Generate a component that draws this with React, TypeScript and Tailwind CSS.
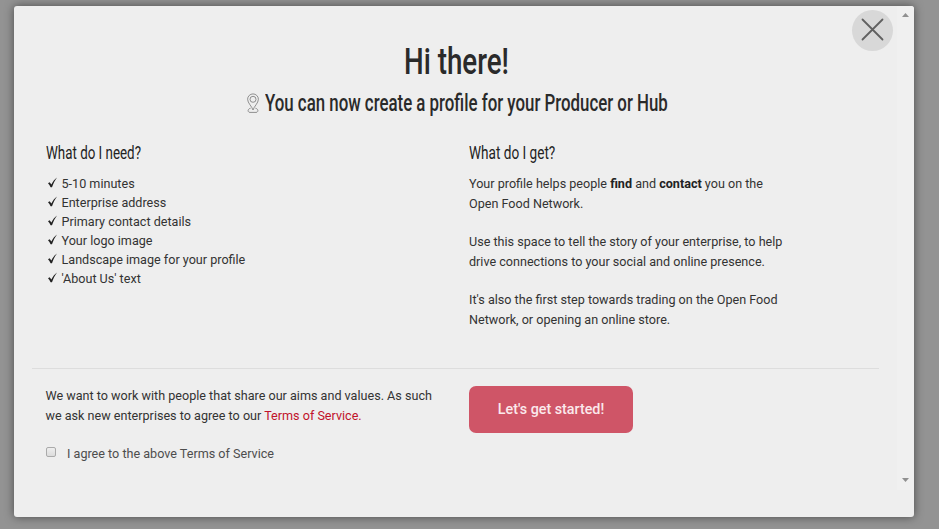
import React from 'react';

const needs = [
  '5-10 minutes',
  'Enterprise address',
  'Primary contact details',
  'Your logo image',
  'Landscape image for your profile',
  "'About Us' text",
];

function Tick() {
  return (
    <svg className="mr-[4px] mb-[2px] ml-[2px] h-[11px] w-[10px] shrink-0" viewBox="0 0 10 11">
      <path d="M0 6.2 L1.6 5.2 L3.4 7.4 C4.8 4.6 6.6 2 9 0.4 C7 3.2 5.2 6.6 4 10.2 L2.6 10.2 C1.9 8.6 1 7.3 0 6.2Z" fill="#222" />
    </svg>
  );
}

function MapPin() {
  return (
    <svg className="mb-[2px] h-[21px] w-[12px]" viewBox="0 0 12 21" fill="none" stroke="#777" strokeWidth="0.8">
      <path d="M6 17 C5 13.5 0.6 10 0.6 6.3 A5.4 5.4 0 0 1 11.4 6.3 C11.4 10 7 13.5 6 17Z" />
      <circle cx="6" cy="6.3" r="3" />
      <path d="M3.6 15.2 C0.4 15.8 0.4 19.4 3 19.4 H9 C11.6 19.4 11.6 15.8 8.4 15.2" />
    </svg>
  );
}

export default function App() {
  return (
    <div className="h-[529px] w-[939px] overflow-hidden bg-[#939393] pt-[6px] pl-[14px] font-[Roboto,sans-serif] text-[12.6px] leading-[20px] text-[#333]">
      <div className="relative h-[511px] w-[900px] rounded-[3px] bg-[#eeeeee] pt-[36px] shadow-[0_0_10px_rgba(0,0,0,0.5)]">
        <h1 className="ml-[389.5px] h-[40px] w-[160px] origin-left scale-x-[0.76] text-[36.5px] leading-[40px] font-medium whitespace-nowrap text-[#2a2a2a]">Hi there!</h1>
        <div className="mt-[10px] flex h-[24px] items-center pl-[233px]">
          <MapPin />
          <h2 className="ml-[6px] origin-left scale-x-[0.732] text-[23px] leading-[24px] font-medium whitespace-nowrap text-[#2a2a2a]">You can now create a profile for your Producer or Hub</h2>
        </div>

        <div className="mt-[25px] flex h-[221px] pl-[31.5px]">
          <section className="w-[423.5px]">
            <h3 className="h-[24px] w-[200px] origin-left scale-x-[0.703] text-[19px] leading-[24px] whitespace-nowrap text-[#222]">What do I need?</h3>
            <ul className="mt-[9px]">
              {needs.map((need) => (
                <li key={need} className="flex h-[19px] items-center leading-[19px]">
                  <Tick />
                  {need}
                </li>
              ))}
            </ul>
          </section>
          <section className="w-[330px]">
            <h3 className="h-[24px] w-[200px] origin-left scale-x-[0.715] text-[19px] leading-[24px] whitespace-nowrap text-[#222]">What do I get?</h3>
            <p className="mt-[9px]">
              Your profile helps people <b className="text-[#222]">find</b> and <b className="text-[#222]">contact</b> you on the<br />Open Food Network.
            </p>
            <p className="mt-[18px]">Use this space to tell the story of your enterprise, to help<br />drive connections to your social and online presence.</p>
            <p className="mt-[18px]">It's also the first step towards trading on the Open Food<br />Network, or opening an online store.</p>
          </section>
        </div>

        <hr className="mt-[6px] ml-[18px] w-[847px] border-[#dddddd]" />
        <div className="mt-[17px] flex pl-[31.5px]">
          <div className="w-[423.5px]">
            <p className="whitespace-nowrap">
              We want to work with people that share our aims and values. As such<br />we ask new enterprises to agree to our <a className="text-[#c1122b]">Terms of Service.</a>
            </p>
            <label className="mt-[18px] flex items-center text-[#4d4d4d]">
              <span className="mr-[11.5px] mb-[4px] h-[10px] w-[10px] rounded-[2px] border border-[#aaa] bg-gradient-to-b from-[#eee] to-[#dcdcdc]" />
              I agree to the above Terms of Service
            </label>
          </div>
          <button className="h-[47px] w-[164px] rounded-[7px] bg-[#cf5567] pb-[2px] text-[14.3px] font-medium text-[#fbe9ec]">Let's get started!</button>
        </div>

        <button aria-label="Close" className="absolute top-[4px] left-[838px] flex h-[41px] w-[41px] items-center justify-center rounded-full bg-[#d8d8d8]">
          <svg className="mb-[2px] h-[23px] w-[23px]" viewBox="0 0 23 23" stroke="#606060" strokeWidth="1.8" strokeLinecap="round">
            <path d="M1.5 1.5 L21.5 21.5 M21.5 1.5 L1.5 21.5" />
          </svg>
        </button>
        <div className="absolute top-0 right-0 flex h-[484px] w-[17px] flex-col items-center justify-between rounded-tr-[3px] bg-[#f0f0f0] pt-[7px] pb-[8px]">
          <svg className="h-[4px] w-[7px]" viewBox="0 0 7 4" fill="#909090"><path d="M0 4 L3.5 0 L7 4Z" /></svg>
          <svg className="h-[4px] w-[7px]" viewBox="0 0 7 4" fill="#909090"><path d="M0 0 L3.5 4 L7 0Z" /></svg>
        </div>
      </div>
    </div>
  );
}
